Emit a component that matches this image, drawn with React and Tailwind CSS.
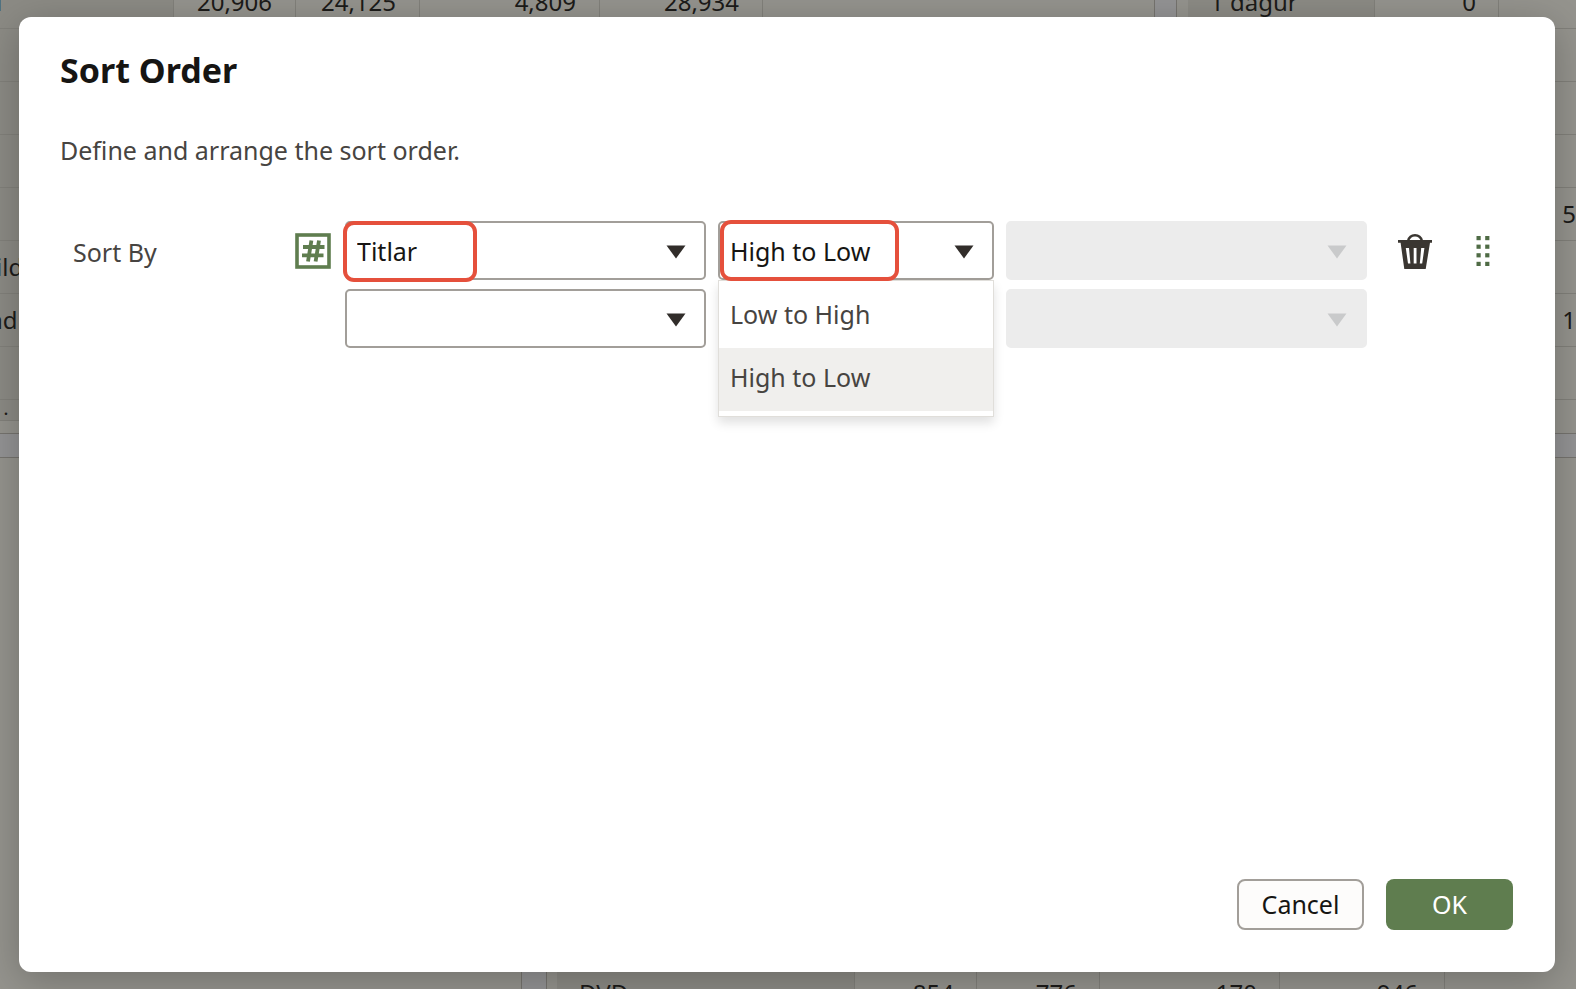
import React, { useState } from "react";

const leftRows = [
  ["l", "20,906", "24,125", "4,809", "28,934"],
  ["", "", "", "", ""],
  ["", "", "", "", ""],
  ["", "", "", "", ""],
  ["", "", "", "", ""],
  ["ild", "", "", "", ""],
  ["nd", "", "", "", ""],
  ["", "", "", "", ""],
];

const rightRows = [
  ["1 dagur", "0", ""],
  ["", "", ""],
  ["", "", ""],
  ["", "", ""],
  ["", "", "5"],
  ["", "", ""],
  ["", "", "1"],
  ["", "", ""],
];

const cell = "h-[53px] border-r border-b border-[#82817b] py-0 text-right font-normal";

function BackgroundPage() {
  return (
    <div
      aria-hidden="true"
      className="absolute inset-0 flex flex-col overflow-hidden bg-[#949495] text-2xl text-[#1c1b19]"
    >
      <div className="flex h-[434px] shrink-0 justify-between border-b border-[#76746f]">
        <div className="w-[1155px] shrink-0 overflow-hidden border-r border-[#76746f] bg-[#95948e]">
          <table className="-mt-[24px] w-full table-fixed border-separate border-spacing-0">
            <colgroup>
              <col className="w-[174px]" />
              <col className="w-[122px]" />
              <col className="w-[124px]" />
              <col className="w-[180px]" />
              <col className="w-[163px]" />
              <col />
            </colgroup>
            <tbody>
              {leftRows.map((row, i) => (
                <tr key={i}>
                  <th className={`${cell} bg-[#8c8b85]`}>
                    <span className={row[0] === "nd" ? "-ml-3 block text-left" : "-ml-1 block text-left"}>{row[0]}</span>
                  </th>
                  {row.slice(1).map((v, j) => (
                    <td key={j} className={`${cell} pr-[23px]`}>{v}</td>
                  ))}
                  <td className={`${cell} border-r-0`} />
                </tr>
              ))}
              <tr>
                <th className="h-[21px] border-b border-[#82817b] bg-[#8c8b85] pl-1 text-left text-sm leading-5">.</th>
                <td colSpan={5} />
              </tr>
            </tbody>
          </table>
        </div>
        <div className="min-w-0 flex-1 pl-[21px]">
          <div className="h-full overflow-hidden border-l border-[#76746f] bg-[#95948e] pl-[11px]">
            <table className="-mt-[24px] w-full table-fixed border-separate border-spacing-0">
              <colgroup>
                <col className="w-[187px]" />
                <col className="w-[124px]" />
                <col />
              </colgroup>
              <tbody>
                {rightRows.map((row, i) => (
                  <tr key={i}>
                    <th className={`${cell} bg-[#8c8b85]`}>
                      <span className="block pl-[22px] text-left">{row[0]}</span>
                    </th>
                    <td className={`${cell} pr-[22px]`}>{row[1]}</td>
                    <td className={`${cell} border-r-0`}>{row[2]}</td>
                  </tr>
                ))}
              </tbody>
            </table>
          </div>
        </div>
      </div>
      <div className="mt-[23px] flex min-h-0 flex-1 border-t border-[#76746f]">
        <div className="w-[522px] shrink-0 border-r border-[#76746f] bg-[#95948e]" />
        <div className="flex min-w-0 flex-1 flex-col justify-end pl-6">
          <div className="flex h-full flex-col justify-end overflow-hidden border-l border-[#76746f] bg-[#95948e] pl-[10px]">
            <table className="-mb-[31px] w-full table-fixed border-separate border-spacing-0">
              <colgroup>
                <col className="w-[298px]" />
                <col className="w-[122px]" />
                <col className="w-[123px]" />
                <col className="w-[180px]" />
                <col className="w-[165px]" />
                <col />
              </colgroup>
              <tbody>
                <tr>
                  <th className={`${cell} bg-[#8c8b85]`}>
                    <span className="block pl-[22px] text-left">DVD</span>
                  </th>
                  <td className={`${cell} pr-[22px]`}>854</td>
                  <td className={`${cell} pr-[22px]`}>776</td>
                  <td className={`${cell} pr-[22px]`}>170</td>
                  <td className={`${cell} pr-[26px]`}>946</td>
                  <td />
                </tr>
              </tbody>
            </table>
          </div>
        </div>
      </div>
    </div>
  );
}

function SelectBox({ label, options = [], value = "", onChange, disabled, children }) {
  return (
    <div className="relative">
      <select
        aria-label={label}
        disabled={disabled}
        value={value}
        onChange={onChange}
        className="block h-[59px] w-full appearance-none rounded-[5px] border-2 border-[#a29e99] bg-white pt-[2px] pr-12 pl-[10px] text-[25px] text-[#161513] opacity-100 outline-none disabled:border-[#ececec] disabled:bg-[#ececec]"
      >
        <option value=""></option>
        {options.map((o) => (
          <option key={o}>{o}</option>
        ))}
      </select>
      <svg
        viewBox="0 0 20 14"
        aria-hidden="true"
        className={
          disabled
            ? "pointer-events-none absolute top-6 right-5 h-[14px] w-5 fill-[#c9cacb]"
            : "pointer-events-none absolute top-6 right-5 h-[14px] w-5 fill-[#312d2a]"
        }
      >
        <path d="M0.5 0.5H19.5L10 13.5Z" />
      </svg>
      {children}
    </div>
  );
}

const directions = ["Low to High", "High to Low"];

export default function App() {
  const [column, setColumn] = useState("Titlar");
  const [direction, setDirection] = useState("High to Low");
  const [nextColumn, setNextColumn] = useState("");

  return (
    <div className="relative flex min-h-screen overflow-hidden font-['Noto_Sans','Open_Sans',sans-serif]">
      <BackgroundPage />
      <div
        role="dialog"
        aria-modal="true"
        aria-labelledby="dialog-title"
        className="relative mt-[17px] mr-[21px] mb-[17px] ml-[19px] flex min-w-0 flex-1 flex-col rounded-xl bg-white pt-[31px] pr-[42px] pb-[42px] pl-[41px] text-[25px] text-[#474441] shadow-[0_8px_40px_rgba(0,0,0,0.25)]"
      >
        <h1 id="dialog-title" className="text-[34px] leading-[44px] font-bold text-[#161513]">
          Sort Order
        </h1>
        <p className="mt-10 leading-9">Define and arrange the sort order.</p>

        <div className="mt-[53px] grid grid-cols-[273px_361fr_276fr_361fr_134px] gap-x-3 gap-y-[9px]">
          <div className="flex items-center justify-between pr-[2px] pl-[13px]">
            <span className="pt-1">Sort By</span>
            <svg viewBox="0 0 36 36" role="img" aria-label="Number" className="size-9 stroke-[#5f7d4f]">
              <rect x="2" y="2" width="32" height="32" fill="none" strokeWidth="3.6" />
              <path d="M16.4 7.5L13 28.5M24 7.5L20.6 28.5M8 14H29.5M7 22.3H28.5" fill="none" strokeWidth="3.8" />
            </svg>
          </div>
          <SelectBox
            label="Sort column"
            options={["Titlar"]}
            value={column}
            onChange={(e) => setColumn(e.target.value)}
          >
            <div className="pointer-events-none absolute top-0 -left-[2px] h-[61px] w-[134px] rounded-[11px] border-4 border-[#e5503c]" />
          </SelectBox>
          <SelectBox
            label="Sort direction"
            options={directions}
            value={direction}
            onChange={(e) => setDirection(e.target.value)}
          >
            <ul
              role="listbox"
              aria-label="Direction options"
              className="absolute top-[59px] left-0 z-10 w-full border border-[#e0deda] bg-white pt-1 pb-[5px] shadow-[0_6px_10px_rgba(0,0,0,0.12)]"
            >
              {directions.map((d) => (
                <li
                  key={d}
                  role="option"
                  aria-selected={d === direction}
                  onClick={() => setDirection(d)}
                  className="flex h-[63px] items-center pb-[3px] pl-[11px] aria-selected:bg-[#f0efed]"
                >
                  {d}
                </li>
              ))}
            </ul>
            <div className="pointer-events-none absolute -top-px left-[2px] z-20 h-[61px] w-[179px] rounded-[11px] border-4 border-[#e5503c]" />
          </SelectBox>
          <SelectBox label="Additional option" disabled />
          <div className="flex items-center gap-[43px] pl-[18px]">
            <button type="button" aria-label="Delete sort level">
              <svg viewBox="0 0 36 36" className="size-9" aria-hidden="true">
                <path d="M11 8C12 4 14.5 2.2 18 2.2S24 4 25 8" fill="none" stroke="#3a3631" strokeWidth="2.4" />
                <path
                  fill="#3a3631"
                  fillRule="evenodd"
                  d="M1 7H35V9.8H33L28.7 36H7.3L3.6 9.8H1ZM8.8 15L11 30.5H13.4L12 15ZM16.7 15V30.5H19.5V15ZM24.2 15L22.8 30.5H25.2L27.4 15Z"
                />
              </svg>
            </button>
            <button type="button" aria-label="Reorder sort level">
              <svg viewBox="0 0 14 32" className="h-8 w-[14px] fill-[#4f6b45]" aria-hidden="true">
                {[0, 1, 2, 3].map((r) => (
                  <g key={r}>
                    <rect x="0.5" y={1 + r * 8.6} width="4.2" height="4.2" />
                    <rect x="9.2" y={1 + r * 8.6} width="4.2" height="4.2" />
                  </g>
                ))}
              </svg>
            </button>
          </div>

          <div className="col-start-2">
            <SelectBox
              label="Next sort column"
              options={["Titlar"]}
              value={nextColumn}
              onChange={(e) => setNextColumn(e.target.value)}
            />
          </div>
          <div className="col-start-4">
            <SelectBox label="Next additional option" disabled />
          </div>
        </div>

        <div className="mt-auto flex justify-end gap-[22px]">
          <button
            type="button"
            className="h-[51px] w-[127px] rounded-lg border-2 border-[#a29e99] bg-[#fdfcfb] text-[#161513]"
          >
            Cancel
          </button>
          <button type="button" className="h-[51px] w-[127px] rounded-lg bg-[#5f7d4f] text-white">
            OK
          </button>
        </div>
      </div>
    </div>
  );
}
